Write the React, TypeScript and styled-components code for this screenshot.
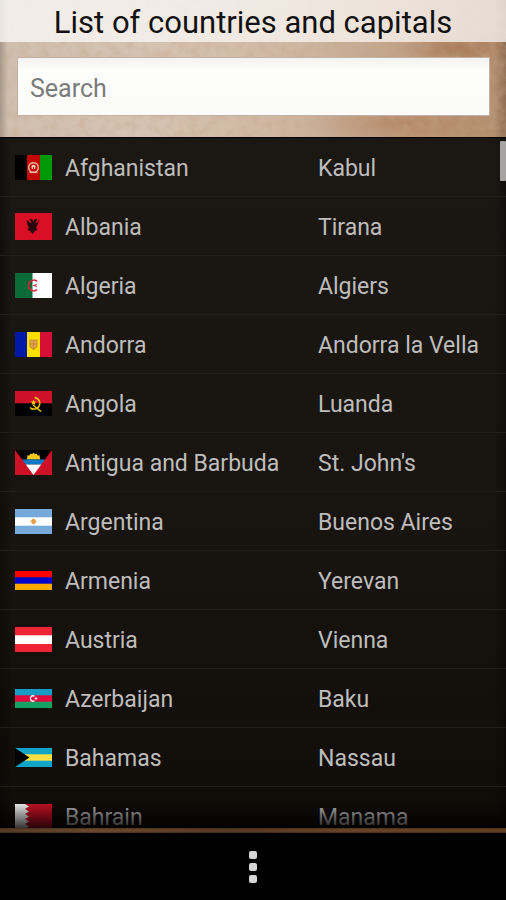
import React from 'react';
import styled, { createGlobalStyle } from 'styled-components';

const GlobalStyle = createGlobalStyle`
  * { box-sizing: border-box; }
  body {
    margin: 0;
    background: #000;
    font-family: Roboto, "Liberation Sans", sans-serif;
  }
`;

const Screen = styled.div`
  display: flex;
  flex-direction: column;
  height: 100vh;
  background: #000;
`;

const Header = styled.header`
  position: relative;
  overflow: hidden;
  flex: none;
  background:
    linear-gradient(90deg, rgba(70, 60, 50, 0.3), transparent 8px, transparent calc(100% - 12px), rgba(70, 45, 25, 0.3)),
    radial-gradient(ellipse 60px 18px at 90% 36%, rgba(148, 88, 48, 0.45), transparent),
    radial-gradient(ellipse 90px 24px at 79% 90%, rgba(164, 104, 62, 0.4), transparent),
    linear-gradient(100deg, #cfbeae 0%, #d6c3b2 30%, #d0b9a4 55%, #c0a085 80%, #b08a6a 100%);
`;

const Texture = styled.svg`
  position: absolute;
  inset: 0;
  width: 100%;
  height: 100%;
  pointer-events: none;
`;

const Title = styled.h1`
  position: relative;
  margin: 0;
  height: 42px;
  padding-top: 2px;
  background: linear-gradient(90deg, rgba(250, 249, 247, 0.8), rgba(248, 243, 239, 0.76));
  color: #111;
  font-size: 31px;
  font-weight: 400;
  line-height: 42px;
  text-align: center;
  white-space: nowrap;
`;

const SearchArea = styled.form`
  position: relative;
  padding: 15px 16px 21px 17px;
`;

const SearchInput = styled.input`
  display: block;
  width: 100%;
  height: 59px;
  padding: 3px 12px 0;
  border: 1px solid #c3b2a3;
  border-radius: 0;
  outline: none;
  background: linear-gradient(#f3f3f2, #fdfdfc 14px, #fbfbf9);
  color: #222;
  font: 400 25px Roboto, "Liberation Sans", sans-serif;
  &::placeholder { color: #7b7b7b; opacity: 1; }
`;

const ListPanel = styled.main`
  position: relative;
  flex: 1;
  min-height: 0;
  border-top: 1px solid #000;
  background:
    linear-gradient(90deg, rgba(0, 0, 0, 0.35), transparent 12px, transparent calc(100% - 12px), rgba(0, 0, 0, 0.35)),
    linear-gradient(#1b1814, #181510 55%, #100c08);
  &::after {
    content: '';
    position: absolute;
    inset: auto 0 0;
    height: 28px;
    background: linear-gradient(transparent, rgba(0, 0, 0, 0.8));
    pointer-events: none;
  }
`;

const Scroller = styled.div`
  height: 100%;
  overflow-y: auto;
  scrollbar-width: none;
`;

const ScrollThumb = styled.div`
  position: absolute;
  top: 3px;
  right: 0;
  width: 6px;
  height: 40px;
  border-radius: 1px;
  background: #a5a4a2;
`;

const CountryTable = styled.table`
  width: 100%;
  table-layout: fixed;
  border-collapse: separate;
  border-spacing: 0;
`;

const FlagColumn = styled.col`
  width: 65px;
`;

const NameColumn = styled.col`
  width: 50%;
`;

const FlagCell = styled.td`
  height: 59px;
  padding: 0 0 0 15px;
  border-bottom: 1px solid #211e1a;
  vertical-align: middle;
`;

const NameCell = styled.th`
  padding: 4px 0 0;
  border-bottom: 1px solid #211e1a;
  color: #bebdbb;
  font-size: 23px;
  font-weight: 400;
  line-height: 28px;
  text-align: left;
  white-space: nowrap;
`;

const Flag = styled.svg`
  display: block;
  width: 37px;
`;

const WoodEdge = styled.div`
  flex: none;
  height: 5px;
  background:
    linear-gradient(rgba(0, 0, 0, 0.3), transparent 2px, transparent 3px, rgba(0, 0, 0, 0.35)),
    linear-gradient(90deg, #5a3c25, #6e4b2f 20%, #5c3b22 45%, #6b4529 70%, #63401f);
`;

const NavBar = styled.nav`
  flex: none;
  display: flex;
  justify-content: center;
  height: 67px;
  background: #000;
`;

const MenuButton = styled.button`
  display: flex;
  flex-direction: column;
  align-items: center;
  justify-content: center;
  gap: 4px;
  width: 56px;
  padding: 0;
  border: 0;
  background: none;
`;

const Dot = styled.span`
  width: 8px;
  height: 8px;
  border-radius: 2px;
  background: #d5d5d5;
`;

type Country = { name: string; capital: string; h: number; flag: React.ReactNode };

const countries: Country[] = [
  {
    name: 'Afghanistan', capital: 'Kabul', h: 25,
    flag: (
      <>
        <rect width="37" height="25" fill="#c40505" />
        <rect width="12" height="25" fill="#000" />
        <rect x="25" width="12" height="25" fill="#009a08" />
        <circle cx="18.5" cy="12.5" r="4.8" fill="none" stroke="#efb5a4" strokeWidth="1.4" />
        <circle cx="18.5" cy="12" r="2.2" fill="#f3c6b8" />
        <path d="M14.500 17.500h8" stroke="#efb5a4" strokeWidth="1.2" />
        <path d="M18.500 12v2.500" stroke="#c40505" />
      </>
    ),
  },
  {
    name: 'Albania', capital: 'Tirana', h: 27,
    flag: (
      <>
        <rect width="37" height="27" fill="#d80f25" />
        <path
          d="M18.500 8.500L17 6l-2.500.5.8 1.500 1.200.8-.5 1.400-1.800-1.700-3-1.500 1.300 2.500-1.200.2 1.500 1.500-1.200.6 1.900 1-.9.9 2 .3-2.300 2.500 1.500.1-.7 1.400 2-.4.4 1.800 1-.5 1 2.500 1-2.500 1 .5.400-1.800 2 .4-.7-1.400 1.500-.1-2.300-2.500 2-.3-.9-.9 1.900-1-1.200-.6 1.500-1.500-1.200-.2L25.800 7l-3 1.500L21 10.200l-.5-1.400 1.200-.8.800-1.500L20 6z"
          fill="#26060c"
        />
      </>
    ),
  },
  {
    name: 'Algeria', capital: 'Algiers', h: 25,
    flag: (
      <>
        <rect width="37" height="25" fill="#fff" />
        <rect width="17.5" height="25" fill="#0a6a38" />
        <path d="M22 8.200a5.300 5.300 0 1 0 0 8.600" fill="none" stroke="#d5223c" strokeWidth="1.7" />
        <path d="M17.500 12.500l5-1.800-1.500 1.800 1.500 1.800z" fill="#d5223c" />
      </>
    ),
  },
  {
    name: 'Andorra', capital: 'Andorra la Vella', h: 25,
    flag: (
      <>
        <rect width="37" height="25" fill="#fedf00" />
        <rect width="12" height="25" fill="#0018a8" />
        <rect x="25" width="12" height="25" fill="#d50f35" />
        <path d="M15 8h7v6.500l-3.500 3-3.500-3z" fill="#dda850" stroke="#c98f35" strokeWidth="1.2" />
        <path d="M18.500 8v9M15 12h7" stroke="#cc8038" strokeWidth="0.9" />
      </>
    ),
  },
  {
    name: 'Angola', capital: 'Luanda', h: 25,
    flag: (
      <>
        <rect width="37" height="12.5" fill="#cf1029" />
        <rect y="12.5" width="37" height="12.5" fill="#000" />
        <path d="M19.500 6.500a5.800 5.800 0 1 1-3 11" fill="none" stroke="#f4c900" strokeWidth="1.5" />
        <path d="M15 16.500l2.500 2M18 14l8 6.500" stroke="#f4c900" strokeWidth="1.5" />
        <path d="M18.500 8.500l.8 2 2 .1-1.500 1.300.5 2-1.800-1-1.800 1 .5-2-1.500-1.300 2-.1z" fill="#f4c900" />
      </>
    ),
  },
  {
    name: 'Antigua and Barbuda', capital: "St. John's", h: 25,
    flag: (
      <>
        <rect width="37" height="25" fill="#000" />
        <path d="M11.500 9.500l.7-2 .2-2.300 2 .2.900-2 1.800.8 1.400-1.700 1.400 1.700 1.800-.8.900 2 2-.2.200 2.300.7 2z" fill="#f1cb20" />
        <rect y="9.500" width="37" height="5" fill="#1277c6" />
        <rect y="14.500" width="37" height="10.500" fill="#fff" />
        <path d="M0 0l18.500 25H0zM37 0L18.500 25H37z" fill="#ce1126" />
      </>
    ),
  },
  {
    name: 'Argentina', capital: 'Buenos Aires', h: 25,
    flag: (
      <>
        <rect width="37" height="25" fill="#75aadb" />
        <rect y="8.3" width="37" height="8.4" fill="#fff" />
        <circle cx="18.5" cy="12.5" r="2.4" fill="#e09335" />
        <path d="M18.500 9.500v6M15.500 12.500h6" stroke="#e5a550" strokeWidth="1" />
      </>
    ),
  },
  {
    name: 'Armenia', capital: 'Yerevan', h: 19,
    flag: (
      <>
        <rect width="37" height="19" fill="#fa0000" />
        <rect y="6.3" width="37" height="12.7" fill="#0000c8" />
        <rect y="12.7" width="37" height="6.3" fill="#ffa900" />
      </>
    ),
  },
  {
    name: 'Austria', capital: 'Vienna', h: 25,
    flag: (
      <>
        <rect width="37" height="25" fill="#ed2536" />
        <rect y="8.3" width="37" height="8.7" fill="#fff" />
      </>
    ),
  },
  {
    name: 'Azerbaijan', capital: 'Baku', h: 19,
    flag: (
      <>
        <rect width="37" height="19" fill="#169cc4" />
        <rect y="6.3" width="37" height="12.7" fill="#e2093d" />
        <rect y="12.7" width="37" height="6.3" fill="#14a262" />
        <path d="M19.500 7.200a2.700 2.700 0 1 0 0 4.600" fill="none" stroke="#fff" strokeWidth="1.3" />
        <path d="M21 7.500l.6 1.400 1.400.6-1.400.6-.6 1.400-.6-1.400-1.400-.6 1.400-.6z" fill="#fff" />
      </>
    ),
  },
  {
    name: 'Bahamas', capital: 'Nassau', h: 19,
    flag: (
      <>
        <rect width="37" height="19" fill="#10a5c7" />
        <rect y="6.3" width="37" height="6.4" fill="#fae042" />
        <path d="M0 0l14.500 9.500L0 19z" fill="#000" />
      </>
    ),
  },
  {
    name: 'Bahrain', capital: 'Manama', h: 25,
    flag: (
      <>
        <rect width="37" height="25" fill="#ce1126" />
        <path d="M0 0h10l4 2.500-4 2.500 4 2.500-4 2.500 4 2.500-4 2.500 4 2.500-4 2.500 4 2.500-4 2.500H0z" fill="#fff" />
      </>
    ),
  },
];

export default function App() {
  return (
    <Screen>
      <GlobalStyle />
      <Header>
        <Texture aria-hidden="true">
          <filter id="grain" x="0" y="0" width="100%" height="100%">
            <feTurbulence type="fractalNoise" baseFrequency="0.1" numOctaves="4" seed="6" />
            <feColorMatrix values="0 0 0 0 0.55  0 0 0 0 0.38  0 0 0 0 0.25  0.8 0 0 0 -0.3" />
          </filter>
          <rect width="100%" height="100%" filter="url(#grain)" />
        </Texture>
        <Title>List of countries and capitals</Title>
        <SearchArea role="search" onSubmit={(e) => e.preventDefault()}>
          <SearchInput type="text" placeholder="Search" aria-label="Search" />
        </SearchArea>
      </Header>
      <ListPanel>
        <Scroller>
          <CountryTable aria-label="List of countries and capitals">
            <colgroup>
              <FlagColumn />
              <NameColumn />
              <col />
            </colgroup>
            <tbody>
              {countries.map((c) => (
                <tr key={c.name}>
                  <FlagCell>
                    <Flag viewBox={`0 0 37 ${c.h}`} height={c.h} aria-hidden="true">{c.flag}</Flag>
                  </FlagCell>
                  <NameCell scope="row">{c.name}</NameCell>
                  <NameCell as="td">{c.capital}</NameCell>
                </tr>
              ))}
            </tbody>
          </CountryTable>
        </Scroller>
        <ScrollThumb />
      </ListPanel>
      <WoodEdge />
      <NavBar>
        <MenuButton type="button" aria-label="More options">
          <Dot />
          <Dot />
          <Dot />
        </MenuButton>
      </NavBar>
    </Screen>
  );
}
